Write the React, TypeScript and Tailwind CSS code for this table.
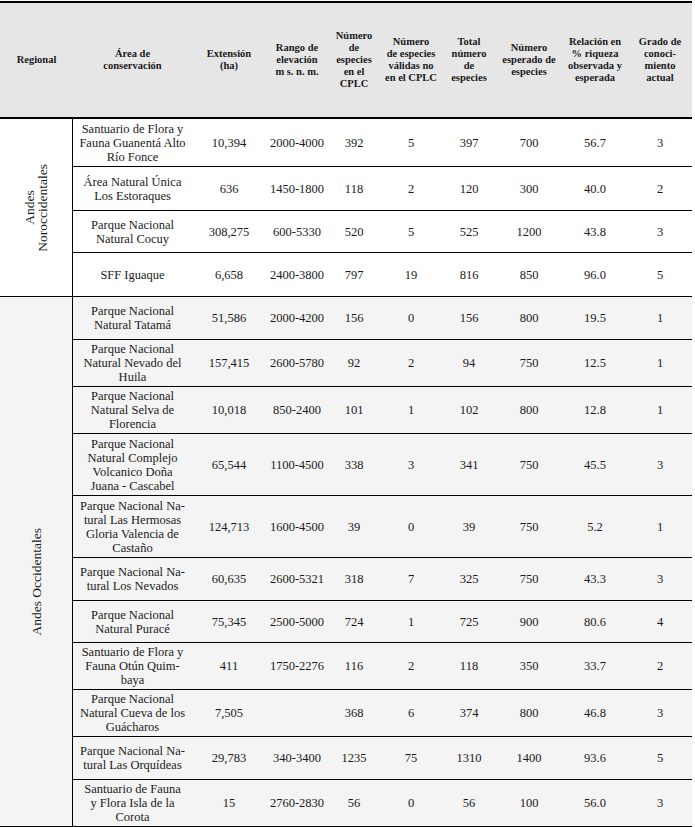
import React from "react";

type Row = {
  area: string[];
  ext: string;
  rango: string;
  cplc: string;
  validas: string;
  total: string;
  esperado: string;
  relacion: string;
  grado: string;
  h: string;
};

const cols =
  "grid grid-cols-[119px_74px_62px_52px_62px_54px_66px_66px_64px]";

const noroccidentales: Row[] = [
  { area: ["Santuario de Flora y", "Fauna Guanentá Alto", "Río Fonce"], ext: "10,394", rango: "2000-4000", cplc: "392", validas: "5", total: "397", esperado: "700", relacion: "56.7", grado: "3", h: "h-[48px]" },
  { area: ["Área Natural Única", "Los Estoraques"], ext: "636", rango: "1450-1800", cplc: "118", validas: "2", total: "120", esperado: "300", relacion: "40.0", grado: "2", h: "h-[44px]" },
  { area: ["Parque Nacional", "Natural Cocuy"], ext: "308,275", rango: "600-5330", cplc: "520", validas: "5", total: "525", esperado: "1200", relacion: "43.8", grado: "3", h: "h-[42px]" },
  { area: ["SFF Iguaque"], ext: "6,658", rango: "2400-3800", cplc: "797", validas: "19", total: "816", esperado: "850", relacion: "96.0", grado: "5", h: "h-[43px]" },
];

const occidentales: Row[] = [
  { area: ["Parque Nacional", "Natural Tatamá"], ext: "51,586", rango: "2000-4200", cplc: "156", validas: "0", total: "156", esperado: "800", relacion: "19.5", grado: "1", h: "h-[43px]" },
  { area: ["Parque Nacional", "Natural Nevado del", "Huila"], ext: "157,415", rango: "2600-5780", cplc: "92", validas: "2", total: "94", esperado: "750", relacion: "12.5", grado: "1", h: "h-[47px]" },
  { area: ["Parque Nacional", "Natural Selva de", "Florencia"], ext: "10,018", rango: "850-2400", cplc: "101", validas: "1", total: "102", esperado: "800", relacion: "12.8", grado: "1", h: "h-[47px]" },
  { area: ["Parque Nacional", "Natural Complejo", "Volcanico Doña", "Juana - Cascabel"], ext: "65,544", rango: "1100-4500", cplc: "338", validas: "3", total: "341", esperado: "750", relacion: "45.5", grado: "3", h: "h-[62px]" },
  { area: ["Parque Nacional Na-", "tural Las Hermosas", "Gloria Valencia de", "Castaño"], ext: "124,713", rango: "1600-4500", cplc: "39", validas: "0", total: "39", esperado: "750", relacion: "5.2", grado: "1", h: "h-[62px]" },
  { area: ["Parque Nacional Na-", "tural Los Nevados"], ext: "60,635", rango: "2600-5321", cplc: "318", validas: "7", total: "325", esperado: "750", relacion: "43.3", grado: "3", h: "h-[43px]" },
  { area: ["Parque Nacional", "Natural Puracé"], ext: "75,345", rango: "2500-5000", cplc: "724", validas: "1", total: "725", esperado: "900", relacion: "80.6", grado: "4", h: "h-[42px]" },
  { area: ["Santuario de Flora y", "Fauna Otún Quim-", "baya"], ext: "411", rango: "1750-2276", cplc: "116", validas: "2", total: "118", esperado: "350", relacion: "33.7", grado: "2", h: "h-[47px]" },
  { area: ["Parque Nacional", "Natural Cueva de los", "Guácharos"], ext: "7,505", rango: "", cplc: "368", validas: "6", total: "374", esperado: "800", relacion: "46.8", grado: "3", h: "h-[47px]" },
  { area: ["Parque Nacional Na-", "tural Las Orquídeas"], ext: "29,783", rango: "340-3400", cplc: "1235", validas: "75", total: "1310", esperado: "1400", relacion: "93.6", grado: "5", h: "h-[43px]" },
  { area: ["Santuario de Fauna", "y Flora Isla de la", "Corota"], ext: "15", rango: "2760-2830", cplc: "56", validas: "0", total: "56", esperado: "100", relacion: "56.0", grado: "3", h: "h-[46px]" },
];

const headers: string[][] = [
  ["Regional"],
  ["Área de", "conservación"],
  ["Extensión", "(ha)"],
  ["Rango de", "elevación", "m s. n. m."],
  ["Número", "de", "especies", "en el", "CPLC"],
  ["Número", "de especies", "válidas no", "en el CPLC"],
  ["Total", "número", "de", "especies"],
  ["Número", "esperado de", "especies"],
  ["Relación en", "% riqueza", "observada y", "esperada"],
  ["Grado de", "conoci-", "miento", "actual"],
];

function Cell({ lines }: { lines: string[] }) {
  return (
    <div className="flex flex-col items-center justify-center text-center">
      {lines.map((l, i) => (
        <span key={i} className="whitespace-nowrap">
          {l}
        </span>
      ))}
    </div>
  );
}

function DataRow({ row, last }: { row: Row; last: boolean }) {
  const values = [row.ext, row.rango, row.cplc, row.validas, row.total, row.esperado, row.relacion, row.grado];
  return (
    <div className={`${cols} ${row.h} ${last ? "" : "border-b border-black"}`}>
      <Cell lines={row.area} />
      {values.map((v, i) => (
        <Cell key={i} lines={[v]} />
      ))}
    </div>
  );
}

function Group({
  rows,
  label,
  bg,
  bottom,
}: {
  rows: Row[];
  label: React.ReactNode;
  bg: string;
  bottom: string;
}) {
  return (
    <div className={`flex ${bg} ${bottom} border-black`}>
      <div className="w-[73px] shrink-0 border-r border-black flex items-center justify-center">
        {label}
      </div>
      <div className="flex flex-col">
        {rows.map((r, i) => (
          <DataRow key={i} row={r} last={i === rows.length - 1} />
        ))}
      </div>
    </div>
  );
}

export default function App() {
  return (
    <div className="w-[695px] h-[827px] bg-white pt-px overflow-hidden text-[#1a1a1a] font-['Liberation_Serif',serif]">
      <div className="w-[692px]">
        <div className="grid grid-cols-[73px_119px_74px_62px_52px_62px_54px_66px_66px_64px] h-[118px] bg-[#e6e6e7] border-t-2 border-b-2 border-black text-[10.5px] font-bold leading-[12px]">
          {headers.map((h, i) => (
            <Cell key={i} lines={h} />
          ))}
        </div>
        <div className="text-[12.5px] leading-[14px]">
          <Group
            rows={noroccidentales}
            bg="bg-white"
            bottom="border-b"
            label={
              <div className="[writing-mode:vertical-rl] rotate-180 text-center text-[13.5px] leading-[13px]">
                Andes
                <br />
                Noroccidentales
              </div>
            }
          />
          <Group
            rows={occidentales}
            bg="bg-[#f4f4f4]"
            bottom="border-b-2"
            label={
              <div className="[writing-mode:vertical-rl] rotate-180 text-center text-[13.5px] leading-[13px] mt-[40px]">
                Andes Occidentales
              </div>
            }
          />
        </div>
      </div>
    </div>
  );
}
